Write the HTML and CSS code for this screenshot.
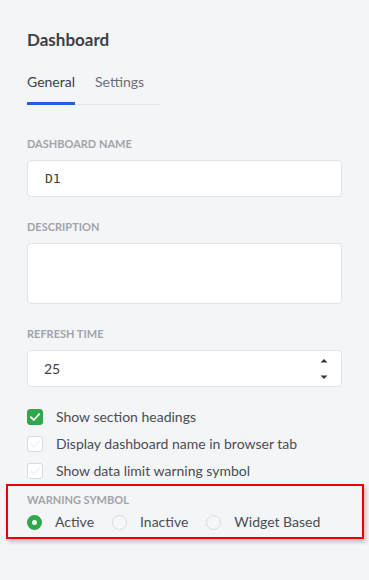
FILE: index.html
```html
<!DOCTYPE html>
<html>
<head>
<meta charset="utf-8">
<link rel="stylesheet" href="styles.css">
</head>
<body>
<div class="panel">
  <h1 class="title">Dashboard</h1>
  <div class="tabs">
    <div class="tab active">General</div>
    <div class="tab">Settings</div>
  </div>

  <div class="field">
    <div class="label">DASHBOARD NAME</div>
    <div class="input mono">D1</div>
  </div>

  <div class="field">
    <div class="label">DESCRIPTION</div>
    <div class="textarea"></div>
  </div>

  <div class="field">
    <div class="label">REFRESH TIME</div>
    <div class="input number">
      <span>25</span>
      <svg class="spin" width="10" height="26" viewBox="0 0 10 26">
        <path d="M1.5 6.5 L5 3 L8.5 6.5 Z" fill="#33363c"/>
        <path d="M1.5 19.5 L5 23 L8.5 19.5 Z" fill="#33363c"/>
      </svg>
    </div>
  </div>

  <div class="checks">
    <div class="check">
      <span class="box on">
        <svg width="16" height="16" viewBox="0 0 16 16"><path d="M3.8 8.2 L6.8 11 L12.2 5.2" fill="none" stroke="#fff" stroke-width="1.8" stroke-linecap="round" stroke-linejoin="round"/></svg>
      </span>
      <span>Show section headings</span>
    </div>
    <div class="check">
      <span class="box">
        <svg width="16" height="16" viewBox="0 0 16 16"><path d="M3.8 8.2 L6.8 11 L12.2 5.2" fill="none" stroke="#f1f2f5" stroke-width="1.6" stroke-linecap="round" stroke-linejoin="round"/></svg>
      </span>
      <span>Display dashboard name in browser tab</span>
    </div>
    <div class="check">
      <span class="box">
        <svg width="16" height="16" viewBox="0 0 16 16"><path d="M3.8 8.2 L6.8 11 L12.2 5.2" fill="none" stroke="#f1f2f5" stroke-width="1.6" stroke-linecap="round" stroke-linejoin="round"/></svg>
      </span>
      <span>Show data limit warning symbol</span>
    </div>
  </div>

  <div class="highlight">
    <div class="label">WARNING SYMBOL</div>
    <div class="radios">
      <div class="radio"><span class="dot on"></span><span>Active</span></div>
      <div class="radio"><span class="dot"></span><span>Inactive</span></div>
      <div class="radio"><span class="dot"></span><span>Widget Based</span></div>
    </div>
  </div>
</div>
</body>
</html>
```
FILE: styles.css
```css
* { box-sizing: border-box; }
html, body {
  margin: 0;
  padding: 0;
  background: #f4f5f7;
}
body {
  font-family: "Lato", "Noto Sans", sans-serif;
  color: #4a4d55;
  width: 369px;
  height: 580px;
  overflow: hidden;
}
.panel {
  padding: 29px 27px 0 27px;
}
.title {
  margin: 0;
  font-size: 17px;
  font-weight: 700;
  color: #3d4047;
  line-height: 22px;
}
.tabs {
  display: flex;
  width: 134px;
  margin-top: 21px;
  border-bottom: 1px solid #e3e5ea;
}
.tab {
  font-size: 14px;
  line-height: 20px;
  padding-bottom: 12px;
  color: #6d7078;
  margin-right: 20px;
}
.tab.active {
  color: #3d4047;
  box-shadow: inset 0 -3px 0 #1f63d6;
  margin-bottom: -1px;
  padding-bottom: 13px;
}
.field {
  margin-top: 32px;
}
.field + .field { margin-top: 23px; }
.label {
  font-size: 11px;
  font-weight: 700;
  color: #a1a3ab;
  line-height: 14px;
  letter-spacing: 0;
  white-space: nowrap;
}
.input, .textarea {
  margin-top: 9px;
  background: #fff;
  border: 1px solid #e2e4ea;
  border-radius: 4px;
  height: 37px;
}
.input {
  display: flex;
  align-items: center;
  padding: 0 17px;
  font-size: 14px;
  color: #3d4047;
}
.mono {
  font-family: "DejaVu Sans Mono", monospace;
  font-size: 13px;
  padding-left: 17px;
}
.textarea { height: 61px; }
.number {
  justify-content: space-between;
  padding-left: 16px;
  padding-right: 12px;
}
.spin { display: block; }
.checks {
  margin-top: 22px;
  display: flex;
  flex-direction: column;
  gap: 11px;
}
.check {
  display: flex;
  align-items: center;
  gap: 13px;
  font-size: 14px;
  line-height: 16px;
  color: #4a4d55;
  white-space: nowrap;
}
.box {
  width: 16px;
  height: 16px;
  border-radius: 3px;
  border: 1px solid #d8dbe3;
  background: #fff;
  display: flex;
  align-items: center;
  justify-content: center;
  flex: none;
}
.box svg { display: block; margin: -1px; }
.box.on {
  background: #2ea84b;
  border-color: #2ea84b;
}
.highlight {
  margin: 5px -22px 0 -21px;
  padding: 7px 20px 6px 19px;
  border: 2px solid #ee0000;
  box-shadow: 2px 3px 4px rgba(0,0,0,0.22);
}
.radios {
  display: flex;
  align-items: center;
  margin-top: 6px;
}
.radio {
  display: flex;
  align-items: center;
  gap: 13px;
  font-size: 14px;
  line-height: 18px;
  margin-right: 18px;
  color: #4a4d55;
  white-space: nowrap;
  flex: none;
}
.radio:last-child { margin-right: 0; }
.dot {
  width: 15px;
  height: 15px;
  border-radius: 50%;
  border: 1px solid #d8dbe3;
  background: #f6f7f9;
  flex: none;
}
.dot.on {
  border: 5px solid #2ea84b;
  background: #fff;
}
```
